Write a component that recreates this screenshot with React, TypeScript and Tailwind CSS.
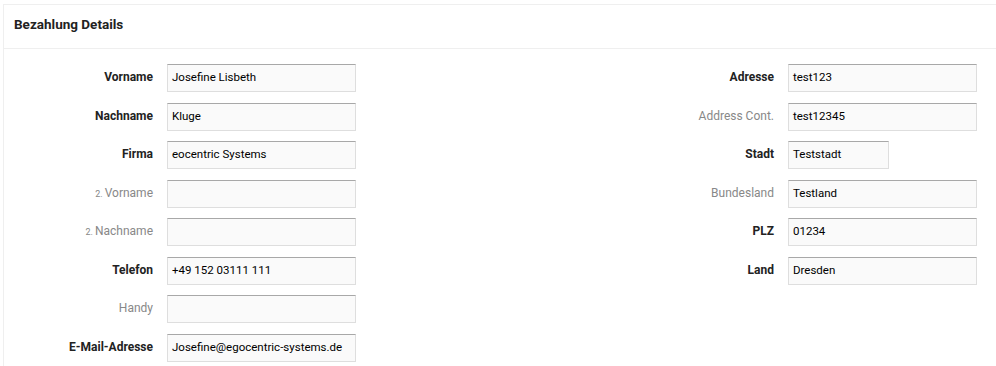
import React from "react";

type Field = { label: string; value?: string; bold?: boolean; prefix?: string; w?: string };

const left: Field[] = [
  { label: "Vorname", value: "Josefine Lisbeth", bold: true },
  { label: "Nachname", value: "Kluge", bold: true },
  { label: "Firma", value: "eocentric Systems", bold: true },
  { label: "Vorname", prefix: "2.", value: "" },
  { label: "Nachname", prefix: "2.", value: "" },
  { label: "Telefon", value: "+49 152 03111 111", bold: true },
  { label: "Handy", value: "" },
  { label: "E-Mail-Adresse", value: "Josefine@egocentric-systems.de", bold: true },
];

const right: Field[] = [
  { label: "Adresse", value: "test123", bold: true },
  { label: "Address Cont.", value: "test12345" },
  { label: "Stadt", value: "Teststadt", bold: true, w: "short" },
  { label: "Bundesland", value: "Testland" },
  { label: "PLZ", value: "01234", bold: true },
  { label: "Land", value: "Dresden", bold: true },
];

function Row({ f, labelW }: { f: Field; labelW: "l" | "r" }) {
  return (
    <div className="flex h-[38.5px] items-start">
      <div
        className={
          (labelW === "l" ? "w-[149px] " : "w-[153px] ") +
          "pt-[5px] text-right text-[12px] leading-[16px] " +
          (f.bold ? "font-bold text-[#222]" : "text-[#888]")
        }
      >
        {f.prefix && <span className="text-[9px] mr-[2px]">{f.prefix}</span>}
        {f.label}
      </div>
      <div
        className={
          (f.w === "short" ? "w-[101px] " : "w-[189px] ") +
          "ml-[14px] h-[28px] border border-[#dedede] border-t-[#a8a8a8] bg-[#fafafa] pl-[4px] flex items-center text-[11.5px] text-black"
        }
      >
        {f.value}
      </div>
    </div>
  );
}

export default function App() {
  return (
    <div className="w-[996px] h-[366px] overflow-hidden bg-white" style={{ fontFamily: "Roboto, 'Liberation Sans', sans-serif" }}>
      <div className="ml-[3px] mt-[4px] w-[1000px] border-l border-t border-[#efefef]">
        <div className="h-[44px] border-b border-[#efefef] pl-[10px] pt-[9px] text-[13.5px] font-bold text-[#222]">
          Bezahlung Details
        </div>
        <div className="flex pt-[15px]">
          <div className="w-[616px]">
            {left.map((f, i) => (
              <Row key={i} f={f} labelW="l" />
            ))}
          </div>
          <div className="w-[380px] ml-[1px]">
            {right.map((f, i) => (
              <Row key={i} f={f} labelW="r" />
            ))}
          </div>
        </div>
      </div>
    </div>
  );
}
